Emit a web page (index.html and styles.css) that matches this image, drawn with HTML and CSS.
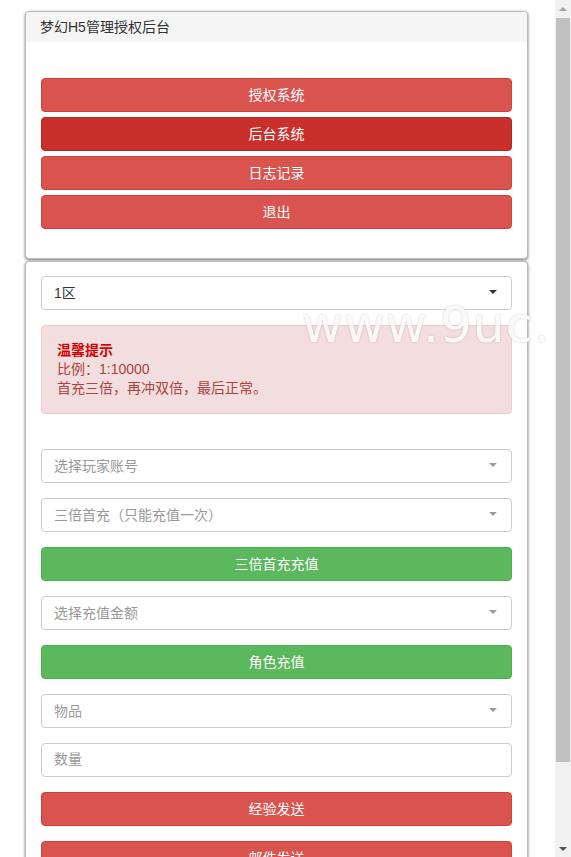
FILE: index.html
```html
<!DOCTYPE html>
<html lang="zh-CN">
<head>
    <meta charset="UTF-8">
    <meta name="viewport" content="width=device-width, initial-scale=1.0">
    <title>梦幻H5管理授权后台</title>
    <link rel="stylesheet" href="styles.css">
</head>
<body>
    <div class="page">
        <div class="main">
            <div class="panel">
                <div class="panel-heading">梦幻H5管理授权后台</div>
                <div class="panel-body nav-body">
                    <button class="btn btn-danger">授权系统</button>
                    <button class="btn btn-danger active">后台系统</button>
                    <button class="btn btn-danger">日志记录</button>
                    <button class="btn btn-danger">退出</button>
                </div>
            </div>

            <div class="panel">
                <div class="panel-body form-body">
                    <div class="select">
                        <span>1区</span>
                        <span class="caret"></span>
                    </div>
                    <div class="alert">
                        <div class="alert-title">温馨提示</div>
                        <div>比例：1:10000</div>
                        <div>首充三倍，再冲双倍，最后正常。</div>
                    </div>
                    <div class="select empty">
                        <span>选择玩家账号</span>
                        <span class="caret"></span>
                    </div>
                    <div class="select empty">
                        <span>三倍首充（只能充值一次）</span>
                        <span class="caret"></span>
                    </div>
                    <button class="btn btn-success">三倍首充充值</button>
                    <div class="select empty">
                        <span>选择充值金额</span>
                        <span class="caret"></span>
                    </div>
                    <button class="btn btn-success">角色充值</button>
                    <div class="select empty">
                        <span>物品</span>
                        <span class="caret"></span>
                    </div>
                    <input type="text" class="input" placeholder="数量">
                    <button class="btn btn-danger">经验发送</button>
                    <button class="btn btn-danger">邮件发送</button>
                </div>
            </div>
        </div>

        <div class="scrollbar">
            <div class="arrow arrow-up"></div>
            <div class="track"><div class="thumb"></div></div>
            <div class="arrow arrow-down"></div>
        </div>

        <div class="watermark">www.9uc.</div>
    </div>
</body>
</html>
```

FILE: styles.css
```css
html, body {
    margin: 0;
    overflow: hidden;
}
body {
    font-family: "Liberation Sans", "Noto Sans CJK SC", sans-serif;
    font-size: 14px;
    color: #333;
    background-color: #fff;
}
.page {
    position: relative;
    display: flex;
    height: 857px;
    overflow: hidden;
}
.main {
    flex: 1;
    padding: 11px 27px 0 25px;
    overflow: hidden;
}
.panel {
    border: 1px solid #bbb;
    border-radius: 4px;
    background-color: #fff;
    box-shadow: 0 1px 3px rgba(0, 0, 0, 0.55);
    margin-bottom: 2px;
    overflow: hidden;
}
.panel-heading {
    background-color: #f5f5f5;
    height: 30px;
    line-height: 30px;
    padding: 0 14px;
    color: #333;
}
.panel-body {
    display: flex;
    flex-direction: column;
}
.nav-body {
    padding: 36px 15px 29px;
    gap: 5px;
}
.form-body {
    padding: 14px 15px 0;
    gap: 15px;
}
.btn {
    display: block;
    width: 100%;
    height: 34px;
    padding: 0 12px 3px;
    border: 1px solid transparent;
    border-radius: 4px;
    font-family: inherit;
    font-size: 14px;
    color: #fff;
    text-align: center;
    cursor: pointer;
}
.btn-danger {
    background-color: #d9534f;
    border-color: #d43f3a;
}
.btn-danger.active {
    background-color: #c9302c;
    border-color: #ac2925;
}
.btn-success {
    background-color: #5cb85c;
    border-color: #4cae4c;
}
.select, .input {
    box-sizing: border-box;
    width: 100%;
    height: 34px;
    border: 1px solid #ccc;
    border-radius: 4px;
    background-color: #fff;
    font-family: inherit;
    font-size: 14px;
}
.select {
    display: flex;
    align-items: center;
    justify-content: space-between;
    padding: 0 14px 2px 12px;
    color: #333;
}
.select.empty {
    color: #999;
}
.caret {
    width: 0;
    height: 0;
    border-left: 4px solid transparent;
    border-right: 4px solid transparent;
    border-top: 4px solid #333;
}
.select.empty .caret {
    border-top-color: #999;
}
.input {
    padding: 0 12px 2px;
    color: #555;
    outline: none;
}
.input::placeholder {
    color: #999;
}
.alert {
    background-color: #f2dede;
    border: 1px solid #ebccd1;
    border-radius: 4px;
    padding: 15px 15px 15px;
    color: #a94442;
    line-height: 19px;
    margin-bottom: 20px;
}
.alert-title {
    color: #d80000;
    font-weight: bold;
}
.scrollbar {
    width: 16px;
    display: flex;
    flex-direction: column;
    background-color: #f1f1f1;
}
.arrow {
    height: 17px;
    display: flex;
    align-items: center;
    justify-content: center;
}
.arrow-up::before {
    content: "";
    border-left: 4px solid transparent;
    border-right: 4px solid transparent;
    border-bottom: 4px solid #a3a3a3;
}
.arrow-down::before {
    content: "";
    border-left: 4px solid transparent;
    border-right: 4px solid transparent;
    border-top: 4px solid #505050;
}
.track {
    flex: 1;
    padding: 1px 1px 0;
}
.thumb {
    height: 744px;
    background-color: #c1c1c1;
}
.watermark {
    position: absolute;
    left: 302px;
    top: 296px;
    font-family: "DejaVu Sans", sans-serif;
    font-size: 50px;
    letter-spacing: 1px;
    color: rgba(255, 255, 255, 0.9);
    text-shadow: 0 0 2px rgba(120, 80, 80, 0.35);
    white-space: nowrap;
    pointer-events: none;
}
```
